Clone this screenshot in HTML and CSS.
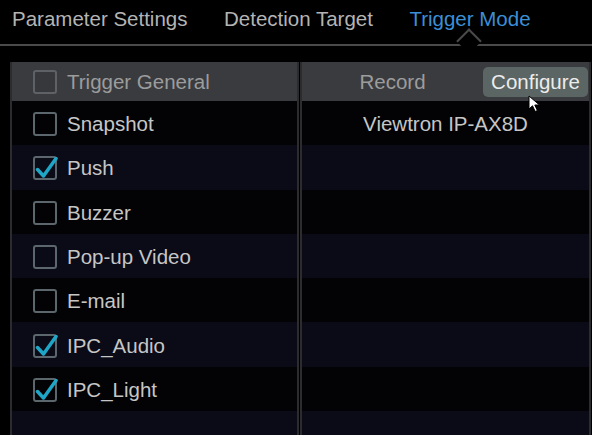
FILE: index.html
```html
<!DOCTYPE html>
<html lang="en">
<head>
    <meta charset="UTF-8">
    <meta name="viewport" content="width=device-width, initial-scale=1.0">
    <title>Trigger Mode</title>
    <link rel="stylesheet" href="styles.css">
</head>

<body>
    <!-- tabs -->
    <div class="tabs">
        <span class="tab">Parameter Settings</span>
        <span class="tab">Detection Target</span>
        <span class="tab active">Trigger Mode</span>
    </div>

    <div class="panels">
        <!-- trigger list -->
        <div class="panel">
            <div class="panel-head">
                <span class="check check-head"></span>
                <span class="label">Trigger General</span>
            </div>
            <div class="row"><span class="check"></span><span class="label">Snapshot</span></div>
            <div class="row"><span class="check on"><svg viewBox="0 0 24 24"><path d="M3.5 12.5 L9.5 19 L22 1.5"/></svg></span><span class="label">Push</span></div>
            <div class="row"><span class="check"></span><span class="label">Buzzer</span></div>
            <div class="row"><span class="check"></span><span class="label">Pop-up Video</span></div>
            <div class="row"><span class="check"></span><span class="label">E-mail</span></div>
            <div class="row"><span class="check on"><svg viewBox="0 0 24 24"><path d="M3.5 12.5 L9.5 19 L22 1.5"/></svg></span><span class="label">IPC_Audio</span></div>
            <div class="row"><span class="check on"><svg viewBox="0 0 24 24"><path d="M3.5 12.5 L9.5 19 L22 1.5"/></svg></span><span class="label">IPC_Light</span></div>
            <div class="row"></div>
        </div>

        <!-- record list -->
        <div class="panel">
            <div class="panel-head">
                <span class="head-title">Record</span>
                <button class="configure">Configure</button>
                <svg class="cursor" viewBox="0 0 14 18" width="14" height="18">
                    <path d="M1 1 L1 14 L4.5 10.8 L7.2 16.5 L9.4 15.5 L6.8 10 L11.5 10 Z"/>
                </svg>
            </div>
            <div class="row center"><span class="label">Viewtron IP-AX8D</span></div>
            <div class="row"></div>
            <div class="row"></div>
            <div class="row"></div>
            <div class="row"></div>
            <div class="row"></div>
            <div class="row"></div>
            <div class="row"></div>
        </div>
    </div>
</body>
</html>
```

FILE: styles.css
```css
body {
    font-family: 'Liberation Sans', Arial, sans-serif;
    background-color: #000;
    color: #c8c8c8;
    margin: 0;
    padding: 0;
    overflow: hidden;
}

/* แถบแท็บด้านบน */
.tabs {
    display: flex;
    align-items: center;
    gap: 36.5px;
    height: 46px;
    padding: 0 0 7px 12px;
    box-sizing: border-box;
    border-bottom: 2px solid #4a4a4a;
}

.tab {
    font-size: 20.5px;
    color: #b4b4b4;
    position: relative;
}

.tab.active {
    color: #3b8fd6;
}

.tab.active::after {
    content: "";
    position: absolute;
    left: 50%;
    bottom: -19px;
    width: 16px;
    height: 16px;
    margin-left: -10px;
    background-color: #000;
    border-top: 2px solid #4a4a4a;
    border-left: 2px solid #4a4a4a;
    transform: rotate(45deg);
}

.panels {
    display: grid;
    grid-template-columns: 289px 291px;
    gap: 1px;
    margin: 16px 0 0 10px;
}

.panel {
    border-left: 2px solid #2c2c2f;
    border-right: 2px solid #2c2c2f;
    height: 380px;
    overflow: hidden;
}

.panel-head {
    position: relative;
    display: flex;
    align-items: center;
    height: 39px;
    background-color: #3a3b3f;
    padding-left: 21px;
}

.head-title {
    flex: 1;
    text-align: center;
    font-size: 20.5px;
    color: #9c9c9c;
    margin-left: -21px;
}

.configure {
    font-family: inherit;
    font-size: 20.5px;
    color: #ececec;
    background-color: #5b6563;
    border: none;
    border-radius: 5px;
    height: 30px;
    padding: 0 8px;
    margin-right: 1px;
}

.cursor {
    position: absolute;
    left: 226px;
    top: 33px;
    fill: #fff;
    stroke: #000;
    stroke-width: 1;
}

.row {
    display: flex;
    align-items: center;
    height: 44.3px;
    box-sizing: border-box;
    padding: 2px 0 0 21px;
    background-color: #030305;
}

.row:nth-child(odd) {
    background-color: #0a0b16;
}

.row.center {
    justify-content: center;
    padding-left: 0;
}

.label {
    font-size: 20.5px;
    color: #c6c6c6;
}

.panel-head .label {
    color: #9c9c9c;
}

/* กล่องเช็ค */
.check {
    position: relative;
    width: 20px;
    height: 20px;
    border: 2px solid #5b676d;
    border-radius: 3px;
    margin-right: 10px;
    flex-shrink: 0;
}

.check-head {
    border-color: #5e6266;
    background-color: #36383b;
}

.check svg {
    position: absolute;
    left: -1px;
    top: -1px;
    width: 24px;
    height: 24px;
    fill: none;
    stroke: #1fa6c6;
    stroke-width: 3.5;
    stroke-linecap: round;
    stroke-linejoin: round;
}
```
